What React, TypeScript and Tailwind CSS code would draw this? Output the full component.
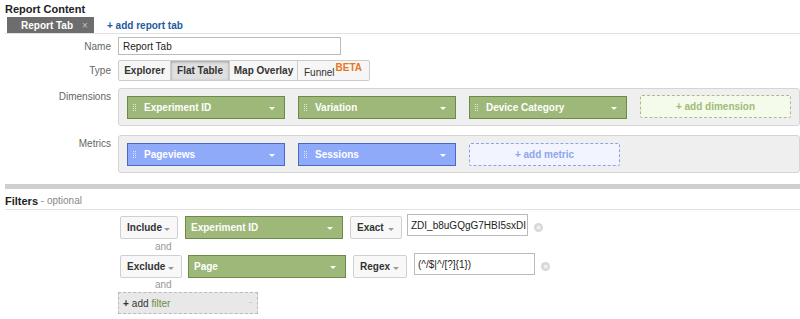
import React from "react";

const font = { fontFamily: '"Liberation Sans", Arial, sans-serif' };

function Grip() {
  return (
    <span className="flex flex-col gap-[1px] mr-[8px]">
      {[0, 1, 2, 3].map((i) => (
        <span key={i} className="flex gap-[1px]">
          <span className="w-[1px] h-[1px] bg-white/70" />
          <span className="w-[1px] h-[1px] bg-white/70" />
        </span>
      ))}
    </span>
  );
}

function Tri({ color }: { color: string }) {
  return <span className={`w-0 h-0 border-l-[3px] border-r-[3px] border-t-[3px] border-l-transparent border-r-transparent ${color}`} />;
}

function Pill({ label, kind }: { label: string; kind: "green" | "blue" }) {
  const cls =
    kind === "green"
      ? "bg-[#9db878] border-[#6c8a48]"
      : "bg-[#8faaf9] border-[#4a68c8]";
  return (
    <div className={`w-[158px] h-[23px] border ${cls} flex items-center pl-[5px] pr-[9px] text-white font-bold text-[10px] whitespace-nowrap`}>
      <Grip />
      <span className="flex-1">{label}</span>
      <span className="mt-[3px] flex"><Tri color="border-t-white" /></span>
    </div>
  );
}

function Sel({ label, w }: { label: string; w: string }) {
  return (
    <div className={`${w} h-[23px] border border-[#d0d0d0] bg-[#f8f8f8] rounded-[2px] flex items-center pl-[6px] pr-[7px] text-[10px] font-bold text-[#333] whitespace-nowrap`}>
      <span className="flex-1">{label}</span>
      <span className="mt-[3px] flex"><Tri color="border-t-[#999]" /></span>
    </div>
  );
}

function FPill({ label, w }: { label: string; w: string }) {
  return (
    <div className={`${w} h-[23px] border border-[#6c8a48] bg-[#9db878] flex items-start pt-[3px] pl-[5px] pr-[9px] text-white font-bold text-[10px] whitespace-nowrap`}>
      <span className="flex-1">{label}</span>
      <span className="mt-[7px] flex"><Tri color="border-t-white" /></span>
    </div>
  );
}

function CloseDot() {
  return (
    <span className="w-[9px] h-[9px] rounded-full bg-[#d8d8d8] flex items-center justify-center text-white text-[8px] leading-none font-bold">×</span>
  );
}

export default function App() {
  return (
    <div className="w-[800px] h-[319px] bg-white overflow-hidden" style={font}>
      <div className="pl-[5px] pt-[1px] h-[17px] text-[11px] font-bold text-[#222] leading-[16px]">Report Content</div>
      <div className="ml-[5px] flex items-stretch border-b border-[#e2e2e2] h-[17px]">
        <div className="ml-[2px] w-[87px] h-[16px] bg-[#6d6d6d] flex items-center pl-[14px] text-white text-[10px] font-bold whitespace-nowrap">
          Report Tab<span className="ml-[9px] text-[#c4c4c4] font-normal text-[10px]">×</span>
        </div>
        <div className="ml-[13px] h-[16px] flex items-center text-[#1b5ba0] text-[10px] font-bold whitespace-nowrap">+ add report tab</div>
      </div>

      <div className="flex items-center mt-[3px] h-[18px]">
        <div className="w-[111px] text-right text-[10px] text-[#666]">Name</div>
        <div className="ml-[7px] w-[223px] h-[18px] border border-[#bbb] flex items-center pl-[4px] text-[10px] text-[#222]">Report Tab</div>
      </div>

      <div className="flex items-center mt-[5px] h-[21px]">
        <div className="w-[111px] text-right text-[10px] text-[#666]">Type</div>
        <div className="ml-[7px] flex h-[21px] border border-[#ccc] rounded-[2px] bg-[#f6f6f6] text-[10px] font-bold text-[#333] whitespace-nowrap">
          <div className="w-[52px] flex items-center justify-center border-r border-[#ccc]">Explorer</div>
          <div className="w-[59px] flex items-center justify-center border-r border-[#ccc] bg-[#e0e0e0] shadow-[inset_0_1px_3px_rgba(0,0,0,0.3)]">Flat Table</div>
          <div className="w-[68px] flex items-center justify-center border-r border-[#ccc]">Map Overlay</div>
          <div className="w-[71px] flex items-start pl-[6px]">
            <span className="mt-[4px] font-normal text-[#333] text-[10px]">Funnel</span>
            <span className="mt-[1px] ml-[1px] text-[#e87722] text-[10px] font-bold leading-[12px]">BETA</span>
          </div>
        </div>
      </div>

      <div className="flex mt-[7px]">
        <div className="w-[111px] text-right text-[10px] text-[#666] pt-[1px]">Dimensions</div>
        <div className="ml-[7px] flex-1 h-[38px] border border-[#d4d4d4] rounded-[3px] bg-[#efefef] flex items-center gap-[13px] pl-[8px]">
          <Pill label="Experiment ID" kind="green" />
          <Pill label="Variation" kind="green" />
          <Pill label="Device Category" kind="green" />
          <div className="w-[151px] h-[23px] mb-[2px] border border-dashed border-[#a9be85] bg-[#f5fbea] rounded-[2px] flex items-center justify-center text-[#a1bb78] text-[10px] font-bold">+ add dimension</div>
        </div>
      </div>

      <div className="flex mt-[9px]">
        <div className="w-[111px] text-right text-[10px] text-[#666] pt-[1px]">Metrics</div>
        <div className="ml-[7px] flex-1 h-[38px] border border-[#d4d4d4] rounded-[3px] bg-[#efefef] flex items-center gap-[13px] pl-[8px]">
          <Pill label="Pageviews" kind="blue" />
          <Pill label="Sessions" kind="blue" />
          <div className="w-[151px] h-[23px] border border-dashed border-[#8ea2e8] bg-[#f2f5ff] rounded-[2px] flex items-center justify-center text-[#8ea5ef] text-[10px] font-bold">+ add metric</div>
        </div>
      </div>

      <div className="ml-[5px] mt-[11px] h-[5px] bg-[#cfcfcf]" />

      <div className="ml-[5px] h-[21px] flex items-end pb-[2px] border-b border-[#e2e2e2] leading-[12px] whitespace-nowrap">
        <span className="font-bold text-[#222] text-[11px]">Filters</span>
        <span className="text-[#888] text-[10px]">&nbsp;- optional</span>
      </div>

      <div className="pl-[120px] mt-[6px]">
        <div className="flex items-start">
          <Sel label="Include" w="w-[58px]" />
          <div className="ml-[7px]"><FPill label="Experiment ID" w="w-[158px]" /></div>
          <div className="ml-[7px]"><Sel label="Exact" w="w-[52px]" /></div>
          <div className="ml-[5px] -mt-[2px] w-[121px] h-[22px] border border-[#bbb] flex items-center pl-[3px] text-[10px] text-[#222] overflow-hidden whitespace-nowrap">ZDI_b8uGQgG7HBI5sxDI</div>
          <div className="ml-[6px] mt-[7px]"><CloseDot /></div>
        </div>
        <div className="h-[16px] pl-[35px] text-[10px] text-[#999] leading-[16px]">and</div>
        <div className="flex items-start">
          <Sel label="Exclude" w="w-[62px]" />
          <div className="ml-[6px]"><FPill label="Page" w="w-[158px]" /></div>
          <div className="ml-[7px]"><Sel label="Regex" w="w-[54px]" /></div>
          <div className="ml-[7px] -mt-[2px] w-[121px] h-[22px] border border-[#bbb] flex items-center pl-[3px] text-[10px] text-[#222] whitespace-nowrap">(^/$|^/[?]{"{1}"})</div>
          <div className="ml-[6px] mt-[7px]"><CloseDot /></div>
        </div>
        <div className="h-[14px] pl-[35px] text-[10px] text-[#999] leading-[14px]">and</div>
        <div className="-ml-[2px] w-[140px] h-[22px] border border-dashed border-[#bbb] bg-[#e8e8e8] flex items-center pl-[4px] pr-[5px] text-[10px] whitespace-nowrap">
          <span className="font-bold text-[#333]">+</span>
          <span className="ml-[3px] text-[#333]">add</span>
          <span className="ml-[3px] text-[#6e8b43]">filter</span>
          <span className="ml-auto text-[#bbb] text-[9px]">-</span>
        </div>
      </div>
    </div>
  );
}
